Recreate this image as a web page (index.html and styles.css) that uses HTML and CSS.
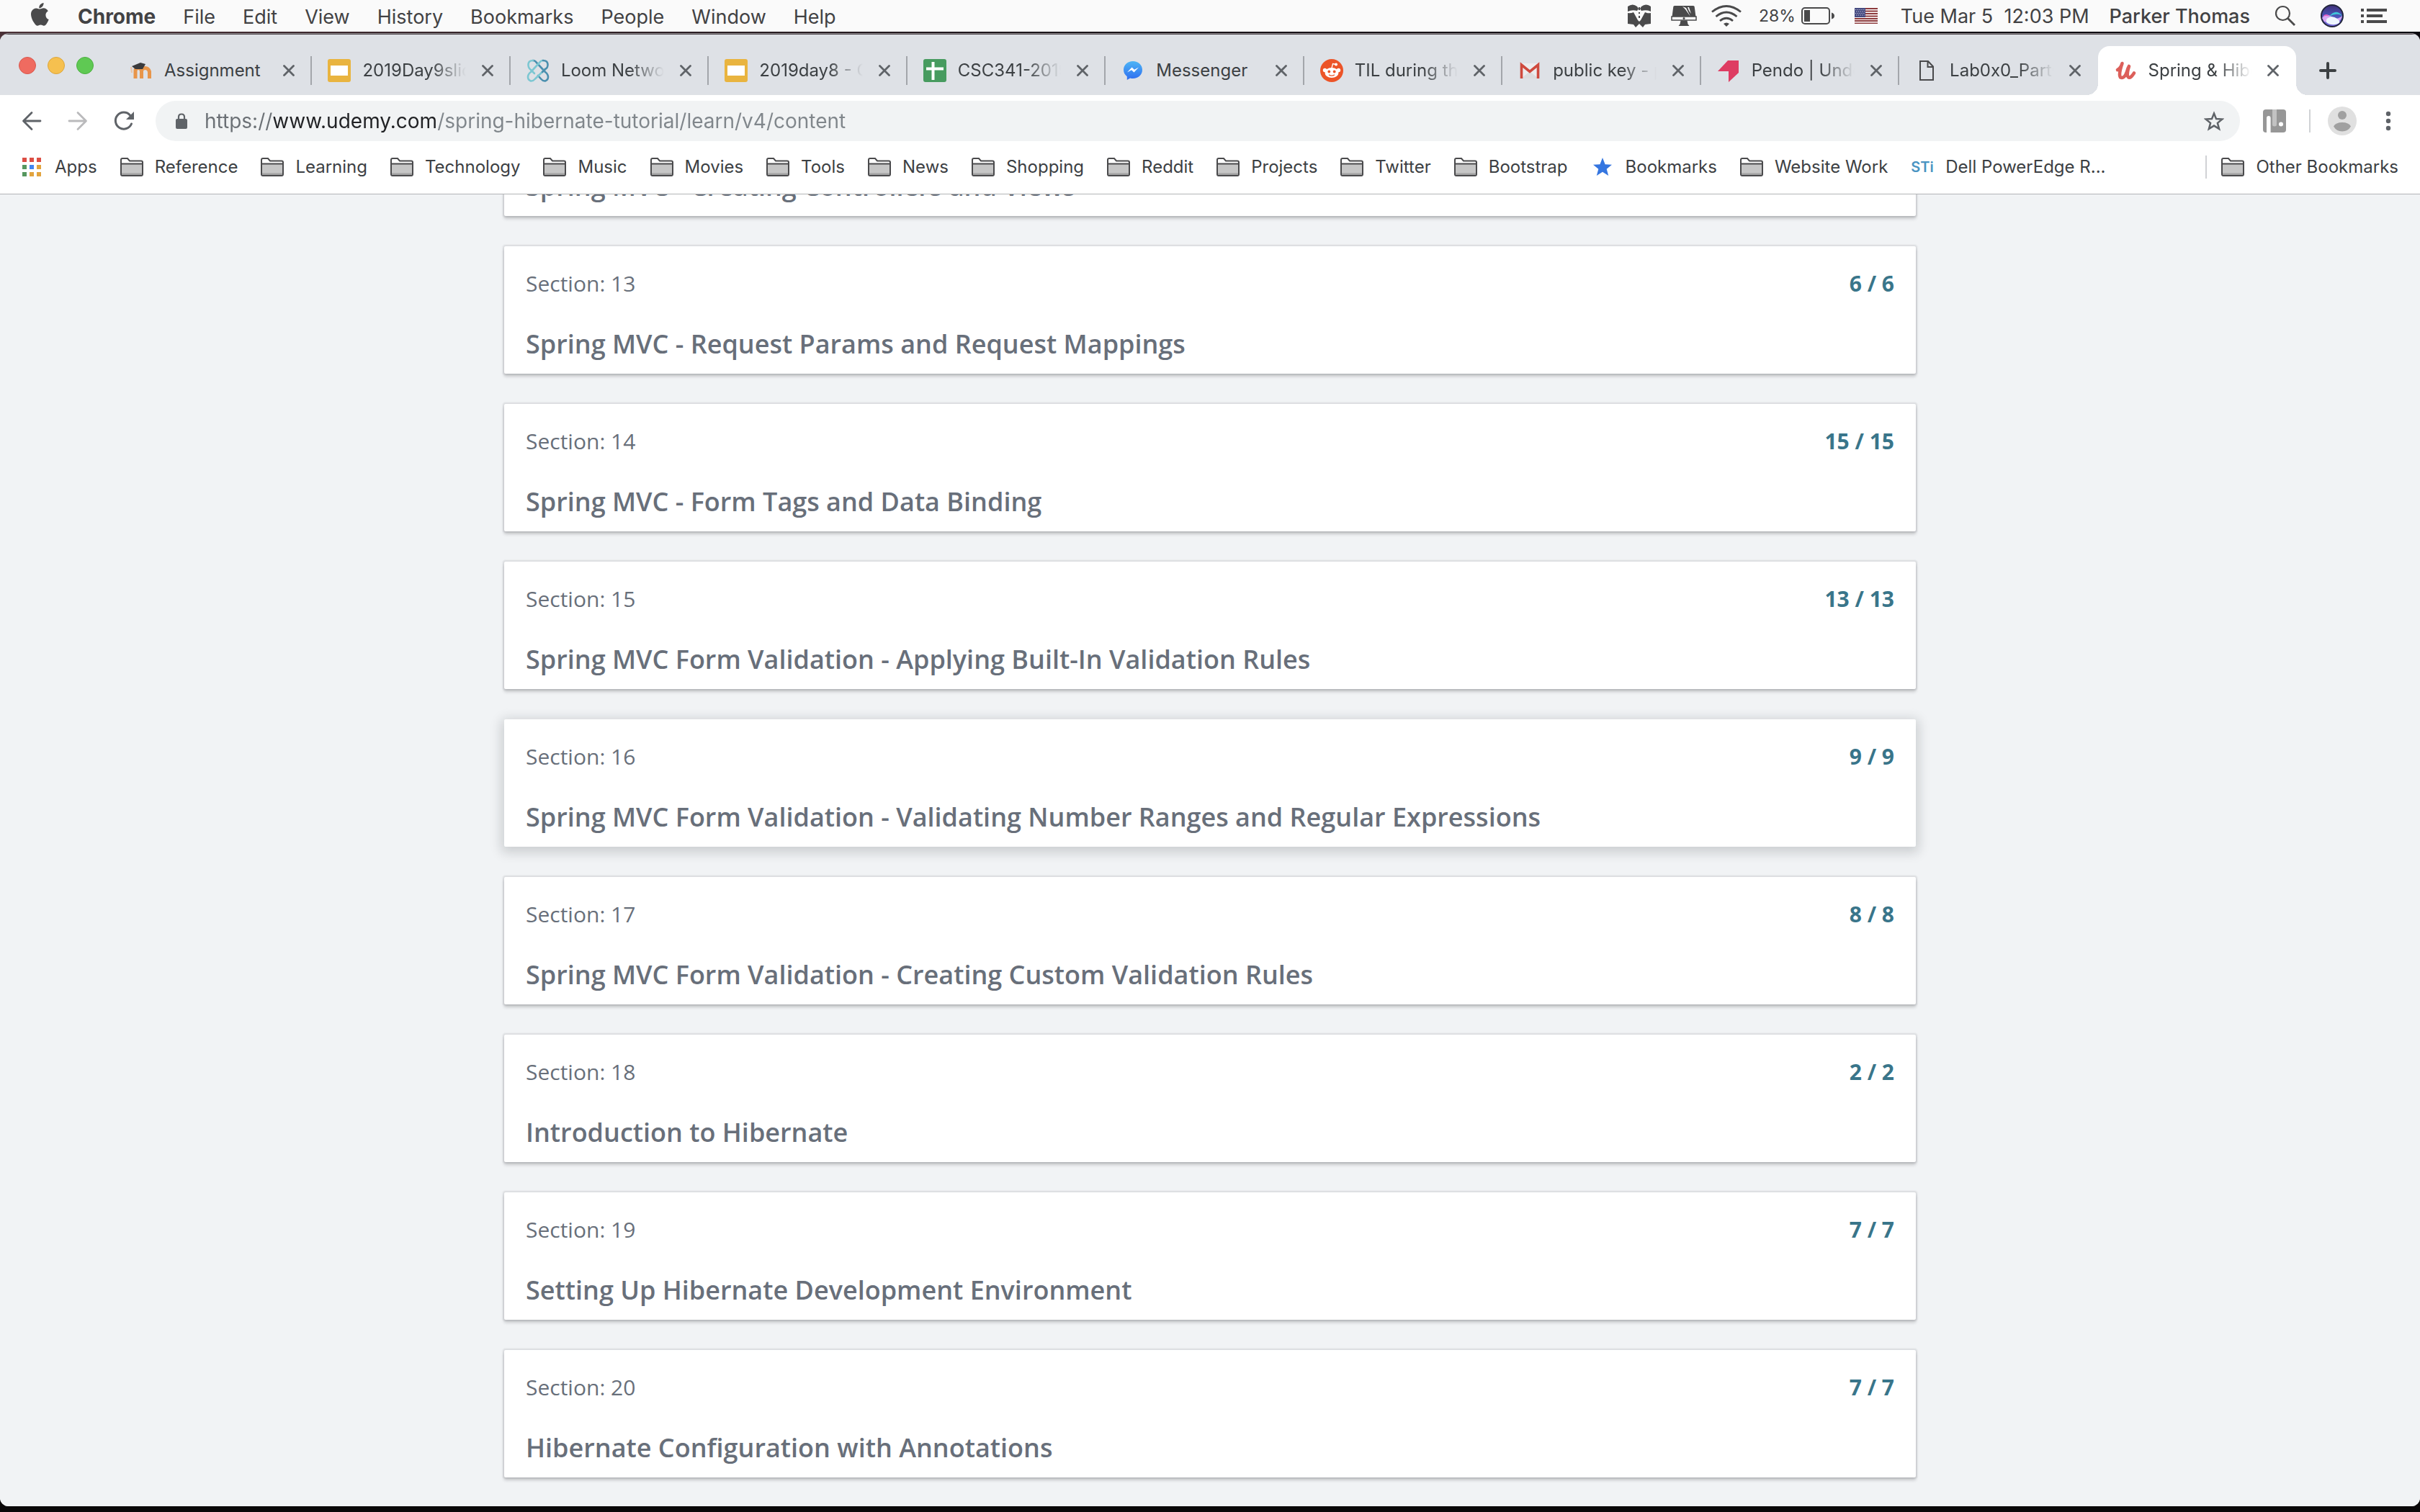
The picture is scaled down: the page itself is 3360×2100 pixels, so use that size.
FILE: index.html
```
<!DOCTYPE html>
<html lang="en">
<head>
<meta charset="utf-8">
<meta name="viewport" content="width=device-width">
<title>Spring &amp; Hibernate</title>
<link rel="stylesheet" href="styles.css">
</head>
<body class="desktop">

<svg class="sprite" aria-hidden="true">
  <symbol id="folder" viewBox="0 0 32 26">
    <path d="M1 23V3q0-2 2-2h7l3 3.500h16q2 0 2 2V23q0 2-2 2H3q-2 0-2-2z" fill="#fff" stroke="#4a4a4c" stroke-width="2"/>
    <path d="M2 9h28v15H2z" fill="#c6c6c6"/>
    <path d="M2 21.500h28V24H2z" fill="#a2a2a2"/>
    <path d="M1 8.500h30" stroke="#4a4a4c" stroke-width="2"/>
  </symbol>
  <symbol id="close" viewBox="0 0 16 16">
    <path d="M1.500 1.500l13 13M14.500 1.500l-13 13" stroke="#5f6368" stroke-width="2.800" stroke-linecap="round"/>
  </symbol>
  <symbol id="slides" viewBox="0 0 32 32">
    <rect width="32" height="32" rx="3" fill="#e9b43f"/><rect x="4" y="9" width="24" height="14" fill="#fff"/>
  </symbol>
</svg>

<header class="menubar">
  <svg class="apple" width="26" height="32" viewBox="0 0 26 32" aria-label="Apple"><path d="M18.500 0c.3 2-.5 3.800-1.700 5.200-1.200 1.300-2.900 2.200-4.500 2.100-.3-1.900.6-3.800 1.700-5C15.200 1 17 .1 18.500 0zM24.800 11.300c-2.200 1.400-3.400 3.200-3.400 5.700 0 2.900 1.700 5.100 4.300 6.100-.6 1.900-1.500 3.700-2.700 5.400-1.100 1.600-2.300 3.200-4.100 3.200-1.800 0-2.300-1.100-4.400-1.100s-2.700 1.100-4.400 1.100c-1.700.1-3-1.700-4.200-3.300C2.500 24.300-.9 15.500 2.300 10.900c1.400-2.100 3.600-3.500 5.900-3.500 2 0 3.400 1.200 5 1.200 1.500 0 2.900-1.300 5.400-1.300 2.200 0 4.600 1.200 6.200 4z" fill="#4a4a4b"/></svg>
  <nav class="menus" aria-label="Application menu">
    <a class="menu menu-app" href="#">Chrome</a>
    <a class="menu" href="#">File</a>
    <a class="menu" href="#">Edit</a>
    <a class="menu" href="#">View</a>
    <a class="menu" href="#">History</a>
    <a class="menu" href="#">Bookmarks</a>
    <a class="menu" href="#">People</a>
    <a class="menu" href="#">Window</a>
    <a class="menu" href="#">Help</a>
  </nav>
  <div class="status">
    <svg width="40" height="32" viewBox="0 0 40 32"><g fill="#4a4a4b"><path d="M0 3q7-5 13 0l2 3-2 3Q6 7 0 10zM32 3q-7-5-13 0l-2 3 2 3q7-2 13 1z"/><path d="M0 12q4 1 8-1l6 11 2 2 2-2 6-11q4 2 8 1v15l-8 1-3 4-5-5-5 5-3-4-8-1z"/><path d="M15 4h2v4h-2zM15 11h2v2h-2zM15 16h2v3h-2z"/></g></svg>
    <svg width="36" height="30" viewBox="0 0 36 30"><path d="M5 1h26q1.500 0 1.700 1.500L35 20H1L3.300 2.500Q3.500 1 5 1z" fill="#4a4a4b"/><path d="M16 2l5 2 6 12-7-10zM23 3l2 0 3 9-3-4z" fill="#fafafa"/><path d="M1 16h34v5H1z" fill="#fafafa" stroke="#4a4a4b" stroke-width="1.500"/><circle cx="18" cy="18.500" r="1.500" fill="#4a4a4b"/><path d="M13.500 21.500h9l1 5 2 2.500h-15l2-2.500z" fill="#4a4a4b"/></svg>
    <svg width="46" height="30" viewBox="0 0 46 30"><g fill="none" stroke="#4a4a4b" stroke-width="2.800"><path d="M1 9.500q20-16 40 0"/><path d="M6.500 16q14.500-12 29 0"/><path d="M12 22q9-7.500 18 0"/></g><path d="M17 26q4-3 8 0l-4 4z" fill="#4a4a4b"/></svg>
    <div class="battery"><span class="charge">28%</span>
      <svg width="46" height="24" viewBox="0 0 46 24"><rect x="1" y="1" width="38" height="22" rx="4" fill="none" stroke="#4a4a4b" stroke-width="2"/><rect x="4" y="4" width="8" height="16" fill="#4a4a4b"/><path d="M42 7.500q4 1 4 4.500t-4 4.500z" fill="#4a4a4b"/></svg>
    </div>
    <svg width="44" height="22" viewBox="0 0 44 22"><rect width="32" height="22" fill="#fff"/><path d="M0 1h32M0 4.500h32M0 8h32M0 11.500h32M0 15h32M0 18h32M0 21.300h32" stroke="#8c3a3c" stroke-width="1.800"/><rect width="15" height="13" fill="#454a80"/><g stroke="#c4c6dc" stroke-width="1.200" stroke-dasharray="1.300 1.500"><path d="M1 2.500h13M2 5h12M1 7.500h13M2 10h12"/></g></svg>
    <time class="clock">Tue Mar 5 &nbsp;12:03 PM</time>
    <a class="user" href="#">Parker Thomas</a>
    <svg width="44" height="30" viewBox="0 0 44 30"><circle cx="11.500" cy="11.500" r="9.500" fill="none" stroke="#4a4a4b" stroke-width="2.200"/><path d="M18.500 18.500l9.500 9.500" stroke="#4a4a4b" stroke-width="2.800"/></svg>
    <svg width="36" height="32" viewBox="0 0 36 32"><defs><linearGradient id="siri" x1="0" y1="0" x2="0" y2="1"><stop offset="0" stop-color="#3f2f78"/><stop offset=".5" stop-color="#4a55b8"/><stop offset="1" stop-color="#7a6be0"/></linearGradient></defs><circle cx="16" cy="16" r="15" fill="url(#siri)" stroke="#22263c" stroke-width="2"/><path d="M2 19q6-8 13-2t15-1q-1 5-4 7-10 4-21 1z" fill="#d8a8f4"/><path d="M12 17q9-12 18-1-8-5-18 1z" fill="#3fc4d8"/><path d="M8 21q7-7 15-1t-3 8q-7 1-12-3z" fill="#eef6ff"/><path d="M3 17q4-6 10 0-5-2-10 0z" fill="#e45cc0"/></svg>
    <svg width="36" height="20" viewBox="0 0 36 20"><path d="M0 2h4M8 2h28M0 10h4M8 10h22M0 18h4M8 18h28" stroke="#4a4a4b" stroke-width="4"/></svg>
  </div>
</header>

<div class="window">
  <div class="tabstrip">
    <div class="lights">
      <button class="light light-close" aria-label="Close window"></button>
      <button class="light light-min" aria-label="Minimise window"></button>
      <button class="light light-zoom" aria-label="Zoom window"></button>
    </div>
    <nav class="tabs" aria-label="Tabs">
      <div class="tab">
        <svg width="32" height="32" viewBox="0 0 32 32"><path d="M8 27V16.500q0-4 4-4t4.500 4V27M16.500 27V16.500q.5-4 5-4t6 5V27" fill="none" stroke="#e8954a" stroke-width="5"/><path d="M3 10l12-5 7 2-4 7H8z" fill="#3a3a3c"/><path d="M2 11l1 8" stroke="#e9c3a6" stroke-width="2"/></svg>
        <a class="tab-title" href="#">Assignment</a>
        <button class="tab-close" aria-label="Close tab"><svg width="16" height="16"><use href="#close"/></svg></button>
      </div>
      <div class="tab">
        <svg width="32" height="32"><use href="#slides"/></svg>
        <a class="tab-title tab-title-fade" href="#">2019Day9slides</a>
        <button class="tab-close" aria-label="Close tab"><svg width="16" height="16"><use href="#close"/></svg></button>
      </div>
      <div class="tab">
        <svg width="32" height="32" viewBox="0 0 32 32"><g fill="none" stroke-width="2.600" stroke-linecap="round" stroke-linejoin="round"><path d="M9 2q3 0 5 3l12 13q4 3 4 7t-4 5.500q-3 .5-6-3l-4-4.500" stroke="#4a8fae"/><path d="M9 2Q3 2 2.500 7T6 15l5 5" stroke="#7cc7d2"/><path d="M23 2q-3 0-5 3L6 18q-4 3-4 7t4 5.500q3 .5 6-3L26 14" stroke="#7cc7d2"/><path d="M23 2q6 0 6.500 5T26 14l-4 4" stroke="#4a8fae"/></g></svg>
        <a class="tab-title tab-title-fade" href="#">Loom Network</a>
        <button class="tab-close" aria-label="Close tab"><svg width="16" height="16"><use href="#close"/></svg></button>
      </div>
      <div class="tab">
        <svg width="32" height="32"><use href="#slides"/></svg>
        <a class="tab-title tab-title-fade" href="#">2019day8 - Go</a>
        <button class="tab-close" aria-label="Close tab"><svg width="16" height="16"><use href="#close"/></svg></button>
      </div>
      <div class="tab">
        <svg width="32" height="32" viewBox="0 0 32 32"><rect width="32" height="32" rx="3" fill="#479b5f"/><path d="M13.500 4v25M4 13.500h24" stroke="#fff" stroke-width="4"/></svg>
        <a class="tab-title tab-title-fade" href="#">CSC341-2019</a>
        <button class="tab-close" aria-label="Close tab"><svg width="16" height="16"><use href="#close"/></svg></button>
      </div>
      <div class="tab">
        <svg width="32" height="32" viewBox="0 0 32 32"><defs><linearGradient id="chat" x1="0" y1="0" x2="0" y2="1"><stop offset="0" stop-color="#4cb4f5"/><stop offset="1" stop-color="#2f6df0"/></linearGradient></defs><path d="M16 3C8.500 3 3 8.400 3 15c0 3.800 1.800 7 4.800 9.200V29l4.400-2.500q1.800.5 3.800.5c7.500 0 13-5.400 13-12S23.500 3 16 3z" fill="url(#chat)"/><path d="M8 18.500l6.500-7 3.500 3.300 6-3.300-6.500 7-3.500-3.300z" fill="#fff"/></svg>
        <a class="tab-title" href="#">Messenger</a>
        <button class="tab-close" aria-label="Close tab"><svg width="16" height="16"><use href="#close"/></svg></button>
      </div>
      <div class="tab">
        <svg width="32" height="32" viewBox="0 0 32 32"><circle cx="16" cy="16" r="16" fill="#ec5428"/><g fill="#fff"><ellipse cx="16" cy="19" rx="9.500" ry="7"/><circle cx="6.500" cy="15.500" r="2.700"/><circle cx="25.500" cy="15.500" r="2.700"/><circle cx="22" cy="7.500" r="2"/></g><path d="M16 12.500l1.500-6 4.500 1" fill="none" stroke="#fff" stroke-width="1.300"/><circle cx="12.300" cy="17.500" r="1.900" fill="#ec5428"/><circle cx="19.700" cy="17.500" r="1.900" fill="#ec5428"/><path d="M12 21.800q4 2.800 8 0" fill="none" stroke="#ec5428" stroke-width="1.300"/></svg>
        <a class="tab-title tab-title-fade" href="#">TIL during the</a>
        <button class="tab-close" aria-label="Close tab"><svg width="16" height="16"><use href="#close"/></svg></button>
      </div>
      <div class="tab">
        <svg width="32" height="32" viewBox="0 0 32 32"><path d="M3 6h26v21H3z" fill="#ececee"/><path d="M4 27l12-10 12 10z" fill="#dcdcde"/><path d="M4.500 27V8L16 17.500 27.500 8v19" fill="none" stroke="#cf4a3e" stroke-width="3.600"/></svg>
        <a class="tab-title tab-title-fade" href="#">public key - pa</a>
        <button class="tab-close" aria-label="Close tab"><svg width="16" height="16"><use href="#close"/></svg></button>
      </div>
      <div class="tab">
        <svg width="32" height="32" viewBox="0 0 32 32"><path d="M15 2h15v17L16 32V17H1z" fill="#de3c62"/></svg>
        <a class="tab-title tab-title-fade" href="#">Pendo | Under</a>
        <button class="tab-close" aria-label="Close tab"><svg width="16" height="16"><use href="#close"/></svg></button>
      </div>
      <div class="tab tab-before-active">
        <svg width="32" height="32" viewBox="0 0 32 32"><path d="M7 3h11l7 7.500V29H7zM17.500 3v8H25" fill="none" stroke="#4a4a4c" stroke-width="2"/></svg>
        <a class="tab-title tab-title-fade" href="#">Lab0x0_Part0</a>
        <button class="tab-close" aria-label="Close tab"><svg width="16" height="16"><use href="#close"/></svg></button>
      </div>
      <div class="tab tab-active">
        <svg width="32" height="32" viewBox="0 0 32 32"><path d="M5 15q5-3 6.500-9-3.500 10-3.500 15.500 0 4.500 3 4.500 5 0 8.500-13l1.500-3q-3 9-2 13.500 1.500 4 5 1 2-2 4-5" fill="none" stroke="#dc5f5a" stroke-width="4.600" stroke-linecap="round" stroke-linejoin="round"/></svg>
        <a class="tab-title tab-title-fade" href="#" aria-current="page">Spring &amp; Hiber</a>
        <button class="tab-close" aria-label="Close tab"><svg width="16" height="16"><use href="#close"/></svg></button>
      </div>
    </nav>
    <button class="new-tab" aria-label="New tab"><svg width="24" height="24" viewBox="0 0 24 24"><path d="M12 2v20M2 12h20" stroke="#3c4043" stroke-width="4" stroke-linecap="round"/></svg></button>
  </div>

  <div class="toolbar">
    <div class="history">
      <button class="nav-button" aria-label="Back"><svg width="28" height="28" viewBox="0 0 28 28"><path d="M26 14H3M14 2.500L2.500 14 14 25.500" fill="none" stroke="#5f6368" stroke-width="2.800" stroke-linecap="round" stroke-linejoin="round"/></svg></button>
      <button class="nav-button" aria-label="Forward" disabled><svg width="28" height="28" viewBox="0 0 28 28"><path d="M2 14h23M14 2.500L25.500 14 14 25.500" fill="none" stroke="#bababc" stroke-width="2.800" stroke-linecap="round" stroke-linejoin="round"/></svg></button>
      <button class="nav-button" aria-label="Reload"><svg width="28" height="28" viewBox="0 0 28 28"><path d="M24.500 18A11.500 11.500 0 1 1 22.500 6" fill="none" stroke="#5f6368" stroke-width="3" stroke-linecap="round"/><path d="M28 1v11H17z" fill="#5f6368"/></svg></button>
    </div>
    <form class="omnibox">
      <svg width="16" height="22" viewBox="0 0 16 22"><rect y="8" width="16" height="14" rx="2" fill="#5f6368"/><path d="M4 9V5.500Q4 1.500 8 1.500t4 4V9" fill="none" stroke="#5f6368" stroke-width="2.200"/></svg>
      <input class="address" type="text" aria-label="Address" value="https://www.udemy.com/spring-hibernate-tutorial/learn/v4/content">
      <button class="bookmark-page" type="button" aria-label="Bookmark this page"><svg width="28" height="28" viewBox="0 0 28 28"><path d="M14 3.500l3 7.500 8.500.500-6.600 5.400 2.200 8.200L14 20.600 6.900 25.100l2.200-8.200L2.500 11.500l8.500-.500z" fill="none" stroke="#5f6368" stroke-width="2.500"/></svg></button>
    </form>
    <button class="tool tool-wide" aria-label="Extension"><svg width="32" height="32" viewBox="0 0 32 32"><rect width="32" height="32" rx="4" fill="#979797"/><path d="M5 32V12q0-3 2.800-3t2.800 3v20z" fill="#fff"/><path d="M13 0h6v21q0 2.500-3 2.500T13 21z" fill="#c2c2c2"/><circle cx="25" cy="20.500" r="3" fill="#fff"/></svg></button>
    <span class="divider"></span>
    <button class="tool" aria-label="Profile"><svg width="40" height="40" viewBox="0 0 40 40"><circle cx="20" cy="20" r="20" fill="#e0e0e0"/><circle cx="20" cy="12" r="6" fill="#a0a0a0"/><path d="M8 27.500q3-5.500 12-5.500t12 5.500q-4 7-12 7t-12-7z" fill="#a0a0a0"/></svg></button>
    <button class="tool" aria-label="Chrome menu"><svg width="8" height="28" viewBox="0 0 8 28"><g fill="#5f6368"><circle cx="4" cy="4" r="3.200"/><circle cx="4" cy="14" r="3.200"/><circle cx="4" cy="24" r="3.200"/></g></svg></button>
  </div>

  <nav class="bookmarks" aria-label="Bookmarks">
    <a class="bookmark" href="#"><svg width="32" height="26" viewBox="0 0 32 26"><path d="M3 0h6v6H3zM13 0h6v6h-6zM23 0h6v6h-6z" fill="#dc4e44"/><path d="M3 10h6v6H3zM3 20h6v6H3z" fill="#56975f"/><path d="M13 10h6v6h-6z" fill="#4285f0"/><path d="M23 10h6v6h-6zM13 20h6v6h-6zM23 20h6v6h-6z" fill="#e2a43e"/></svg>Apps</a>
    <a class="bookmark" href="#"><svg width="32" height="26"><use href="#folder"/></svg>Reference</a>
    <a class="bookmark" href="#"><svg width="32" height="26"><use href="#folder"/></svg>Learning</a>
    <a class="bookmark" href="#"><svg width="32" height="26"><use href="#folder"/></svg>Technology</a>
    <a class="bookmark" href="#"><svg width="32" height="26"><use href="#folder"/></svg>Music</a>
    <a class="bookmark" href="#"><svg width="32" height="26"><use href="#folder"/></svg>Movies</a>
    <a class="bookmark" href="#"><svg width="32" height="26"><use href="#folder"/></svg>Tools</a>
    <a class="bookmark" href="#"><svg width="32" height="26"><use href="#folder"/></svg>News</a>
    <a class="bookmark" href="#"><svg width="32" height="26"><use href="#folder"/></svg>Shopping</a>
    <a class="bookmark" href="#"><svg width="32" height="26"><use href="#folder"/></svg>Reddit</a>
    <a class="bookmark" href="#"><svg width="32" height="26"><use href="#folder"/></svg>Projects</a>
    <a class="bookmark" href="#"><svg width="32" height="26"><use href="#folder"/></svg>Twitter</a>
    <a class="bookmark" href="#"><svg width="32" height="26"><use href="#folder"/></svg>Bootstrap</a>
    <a class="bookmark" href="#"><svg width="32" height="26" viewBox="0 0 32 26"><path d="M16 0l3.600 9.200 9.400.5-7.300 6 2.500 9.300L16 19.700 7.800 25l2.500-9.300-7.300-6 9.400-.5z" fill="#3576e0"/></svg>Bookmarks</a>
    <a class="bookmark" href="#"><svg width="32" height="26"><use href="#folder"/></svg>Website Work</a>
    <a class="bookmark" href="#"><span class="sti">STi</span>Dell PowerEdge R...</a>
    <span class="divider divider-end"></span>
    <a class="bookmark" href="#"><svg width="32" height="26"><use href="#folder"/></svg>Other Bookmarks</a>
  </nav>

  <main class="page">
    <div class="sections">
      <a class="card card-cut" href="#"><h2 class="card-title">Spring MVC - Creating Controllers and Views</h2></a>
      <a class="card" href="#"><div class="card-head"><span>Section: 13</span><span class="count">6 / 6</span></div><h2 class="card-title">Spring MVC - Request Params and Request Mappings</h2></a>
      <a class="card" href="#"><div class="card-head"><span>Section: 14</span><span class="count">15 / 15</span></div><h2 class="card-title">Spring MVC - Form Tags and Data Binding</h2></a>
      <a class="card" href="#"><div class="card-head"><span>Section: 15</span><span class="count">13 / 13</span></div><h2 class="card-title">Spring MVC Form Validation - Applying Built-In Validation Rules</h2></a>
      <a class="card card-hover" href="#"><div class="card-head"><span>Section: 16</span><span class="count">9 / 9</span></div><h2 class="card-title">Spring MVC Form Validation - Validating Number Ranges and Regular Expressions</h2></a>
      <a class="card" href="#"><div class="card-head"><span>Section: 17</span><span class="count">8 / 8</span></div><h2 class="card-title">Spring MVC Form Validation - Creating Custom Validation Rules</h2></a>
      <a class="card" href="#"><div class="card-head"><span>Section: 18</span><span class="count">2 / 2</span></div><h2 class="card-title">Introduction to Hibernate</h2></a>
      <a class="card" href="#"><div class="card-head"><span>Section: 19</span><span class="count">7 / 7</span></div><h2 class="card-title">Setting Up Hibernate Development Environment</h2></a>
      <a class="card" href="#"><div class="card-head"><span>Section: 20</span><span class="count">7 / 7</span></div><h2 class="card-title">Hibernate Configuration with Annotations</h2></a>
    </div>
  </main>
</div>
</body>
</html>
```
FILE: styles.css
```
* { box-sizing: border-box; }

.desktop {
  margin: 0;
  height: 100vh;
  display: flex;
  flex-direction: column;
  background: linear-gradient(90deg, #4a3036, #1a1419 45%, #0c0a10) top / 100% 60px no-repeat #0a0809;
  font-family: Inter, "Liberation Sans", sans-serif;
  color: #3c4043;
}

.sprite { display: none; }
a { color: inherit; text-decoration: none; }
svg { display: block; flex: none; }
button { border: 0; padding: 0; background: none; display: flex; align-items: center; justify-content: center; }

/* System menu bar */
.menubar {
  flex: none;
  height: 44px;
  padding: 0 46px 0 42px;
  display: flex;
  align-items: center;
  gap: 40px;
  background: #fafafa;
  color: #424244;
  font-size: 27px;
  line-height: 40px;
  white-space: nowrap;
}
.apple { margin-bottom: 4px; }
.menus { display: flex; align-items: baseline; gap: 38px; padding-top: 2px; }
.menu-app { font-size: 28px; font-weight: 700; }
.status { margin-left: auto; display: flex; align-items: center; gap: 20px; }
.battery { display: flex; align-items: center; gap: 8px; padding-right: 8px; }
.charge { font-size: 23px; }
.clock { padding: 2px 8px 0 0; }
.user { font-weight: 500; padding: 2px 14px 0 0; }

/* Browser window */
.window {
  flex: 1;
  min-height: 0;
  margin: 2px 0 8px;
  display: flex;
  flex-direction: column;
  border-top: 1px solid #8d888c;
  border-radius: 12px;
  overflow: hidden;
  background: #fff;
}

.tabstrip {
  flex: none;
  height: 85px;
  padding-left: 26px;
  display: flex;
  align-items: flex-end;
  background: #dee1e6;
  border-top: 1px solid #4a4247;
}
.lights { height: 82px; display: flex; align-items: center; gap: 16px; margin-right: 28px; }
.light { width: 24px; height: 24px; border-radius: 50%; }
.light-close { background: #ef6b60; border: 1px solid #d9584e; }
.light-min { background: #f6c04f; border: 1px solid #dca63c; }
.light-zoom { background: #5fc953; border: 1px solid #4bb040; }

.tabs { flex: 1; min-width: 0; display: flex; }
.tab {
  flex: 1 1 0;
  min-width: 0;
  height: 68px;
  padding-left: 22px;
  display: flex;
  align-items: center;
  gap: 16px;
}
.tab::after { content: ""; width: 2px; height: 40px; background: #a3a6ab; }
.tab-title { flex: 1; min-width: 0; overflow: hidden; white-space: nowrap; font-size: 24px; line-height: 32px; }
.tab-title-fade { -webkit-mask-image: linear-gradient(90deg, #000 calc(100% - 48px), transparent); mask-image: linear-gradient(90deg, #000 calc(100% - 48px), transparent); }
.tab-close { width: 28px; height: 28px; }
.tab-before-active::after { background: none; }
.tab-active { position: relative; background: #fff; border-radius: 16px 16px 0 0; }
.tab-active .tab-close { margin-right: 18px; }
.tab-active::after,
.tab-active::before {
  content: "";
  position: absolute;
  bottom: 0;
  width: 16px;
  height: 16px;
}
.tab-active::before { right: 100%; background: radial-gradient(circle at 0 0, #dee1e6 16px, #fff 16px); }
.tab-active::after { left: 100%; background: radial-gradient(circle at 100% 0, #dee1e6 16px, #fff 16px); }
.new-tab { width: 88px; height: 68px; margin-right: 84px; }

.toolbar {
  flex: none;
  padding: 8px 24px 8px 12px;
  display: flex;
  align-items: center;
  gap: 24px;
}
.history { display: flex; margin-right: -12px; }
.nav-button { width: 64px; height: 56px; }
.omnibox {
  flex: 1;
  height: 56px;
  padding: 0 22px 0 28px;
  display: flex;
  align-items: center;
  gap: 24px;
  border-radius: 28px;
  background: #f1f3f4;
}
.address {
  flex: 1;
  min-width: 0;
  border: 0;
  padding: 0;
  outline: 0;
  font: 28px/40px Inter, "Liberation Sans", sans-serif;
  color: transparent;
  background: linear-gradient(90deg, #6b7075 96px, #202124 96px, #202124 324px, #80868b 324px);
  -webkit-background-clip: text;
  background-clip: text;
}
.tool { width: 40px; height: 40px; }
.tool-wide { width: 48px; }
.divider { flex: none; width: 2px; height: 32px; background: #d0d2d5; }

.bookmarks {
  flex: none;
  padding: 12px 30px 21px 28px;
  display: flex;
  align-items: center;
  gap: 32px;
  border-bottom: 1px solid #b2b4b6;
  font-size: 24px;
  line-height: 32px;
  white-space: nowrap;
}
.bookmark { display: flex; align-items: center; gap: 16px; }
.divider-end { margin-left: auto; margin-right: -12px; }
.sti { width: 32px; font-size: 20px; font-weight: 600; color: #4a94c2; }

/* Course sections */
.page {
  flex: 1;
  min-height: 0;
  overflow: hidden;
  padding: 0 700px;
  background: #f1f3f5;
  font-family: "Open Sans", "Noto Sans", sans-serif;
  color: #686f7a;
}
.sections { display: flex; flex-direction: column; gap: 42px; }
.card {
  padding: 32px 30px 17px;
  display: flex;
  flex-direction: column;
  gap: 40px;
  border-radius: 2px;
  background: #fff;
  box-shadow: 0 0 2px 2px rgba(20, 23, 28, .1), 0 4px 4px 0 rgba(20, 23, 28, .18);
}
.card-hover { box-shadow: 0 4px 16px 4px rgba(20, 23, 28, .17); }
.card-cut { margin-top: -35px; padding-top: 0; }
.card-head { display: flex; justify-content: space-between; font-size: 30px; line-height: 40px; }
.count { font-weight: 700; color: #39758a; }
.card-title { margin: 0; font-size: 36px; line-height: 48px; font-weight: 600; }
```
